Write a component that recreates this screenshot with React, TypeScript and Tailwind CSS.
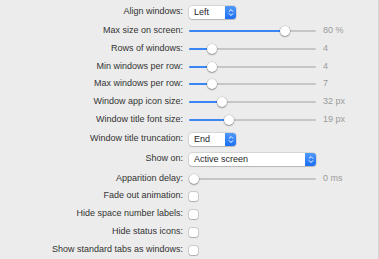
import React from 'react';

type Row =
  | { kind: 'popup'; label: string; value: string; wide?: boolean; cls: string }
  | { kind: 'slider'; label: string; frac: number; value: string; cls: string }
  | { kind: 'check'; label: string; cls: string };

const rows: Row[] = [
  { kind: 'popup', label: 'Align windows:', value: 'Left', cls: 'h-[18px] mb-px' },
  { kind: 'slider', label: 'Max size on screen:', frac: 0.78, value: '80 %', cls: 'h-[18px]' },
  { kind: 'slider', label: 'Rows of windows:', frac: 0.154, value: '4', cls: 'h-[18px]' },
  { kind: 'slider', label: 'Min windows per row:', frac: 0.154, value: '4', cls: 'h-[17px]' },
  { kind: 'slider', label: 'Max windows per row:', frac: 0.154, value: '7', cls: 'h-[18px]' },
  { kind: 'slider', label: 'Window app icon size:', frac: 0.24, value: '32 px', cls: 'h-[18px]' },
  { kind: 'slider', label: 'Window title font size:', frac: 0.3, value: '19 px', cls: 'h-[18px] mb-px' },
  { kind: 'popup', label: 'Window title truncation:', value: 'End', cls: 'h-[18px] mb-[2px]' },
  { kind: 'popup', label: 'Show on:', value: 'Active screen', wide: true, cls: 'h-[18px] mb-[2px]' },
  { kind: 'slider', label: 'Apparition delay:', frac: 0, value: '0 ms', cls: 'h-[17px]' },
  { kind: 'check', label: 'Fade out animation:', cls: 'h-[18px]' },
  { kind: 'check', label: 'Hide space number labels:', cls: 'h-[18px]' },
  { kind: 'check', label: 'Hide status icons:', cls: 'h-[18px]' },
  { kind: 'check', label: 'Show standard tabs as windows:', cls: 'h-[18px]' },
];

function Popup({ value, wide }: { value: string; wide?: boolean }) {
  return (
    <div
      className={`flex h-[13px] items-stretch rounded-[3px] bg-white shadow-[0_0_0_0.5px_rgba(0,0,0,0.18),0_1px_1px_rgba(0,0,0,0.15)] ${
        wide ? 'w-[127px]' : 'w-[47px]'
      }`}
    >
      <span className="flex-1 pl-[5px] text-[9px] leading-[13px] text-[#262626]">{value}</span>
      <span className="flex w-[11px] items-center justify-center rounded-r-[3px] bg-gradient-to-b from-[#4f98fa] to-[#1c6ef3]">
        <svg width="6" height="9" viewBox="0 0 6 9" fill="none" stroke="white" strokeWidth="1" strokeLinecap="round" strokeLinejoin="round">
          <path d="M1.2 3.3 3 1.5 4.8 3.3" />
          <path d="M1.2 5.7 3 7.5 4.8 5.7" />
        </svg>
      </span>
    </div>
  );
}

function Slider({ frac, value }: { frac: number; value: string }) {
  const center = 5 + frac * 117;
  return (
    <div className="flex items-center">
      <div className="relative h-[11px] w-[127px]">
        <div className="absolute left-0 right-0 top-[4.5px] h-[2px] rounded-full bg-[#c6c6c6]" />
        <div
          className="absolute left-0 top-[4.5px] h-[2px] rounded-full bg-[#3b86f5]"
          style={{ width: center }}
        />
        <div
          className="absolute top-[0.5px] h-[10px] w-[10px] rounded-full bg-white shadow-[0_0_0_0.5px_rgba(0,0,0,0.2),0_1px_1.5px_rgba(0,0,0,0.3)]"
          style={{ left: center - 5 }}
        />
      </div>
      <span className="ml-[7px] text-[9px] text-[#9b9b9b]">{value}</span>
    </div>
  );
}

function Check() {
  return (
    <div className="h-[9px] w-[9px] rounded-[2px] bg-white shadow-[0_0_0_0.5px_rgba(0,0,0,0.25),0_0.5px_1px_rgba(0,0,0,0.15)]" />
  );
}

export default function App() {
  return (
    <div className="h-[259px] w-[379px] overflow-hidden border-r border-[#d3d3d3] bg-[#ececec] pt-[3px] font-['Liberation_Sans',Arial,sans-serif]">
      {rows.map((row) => (
        <div key={row.label} className={`flex items-center ${row.cls}`}>
          <span className="w-[184px] pr-px text-right text-[9px] text-[#333333]">{row.label}</span>
          <div className="ml-[5px]">
            {row.kind === 'popup' && <Popup value={row.value} wide={row.wide} />}
            {row.kind === 'slider' && <Slider frac={row.frac} value={row.value} />}
            {row.kind === 'check' && <Check />}
          </div>
        </div>
      ))}
    </div>
  );
}
